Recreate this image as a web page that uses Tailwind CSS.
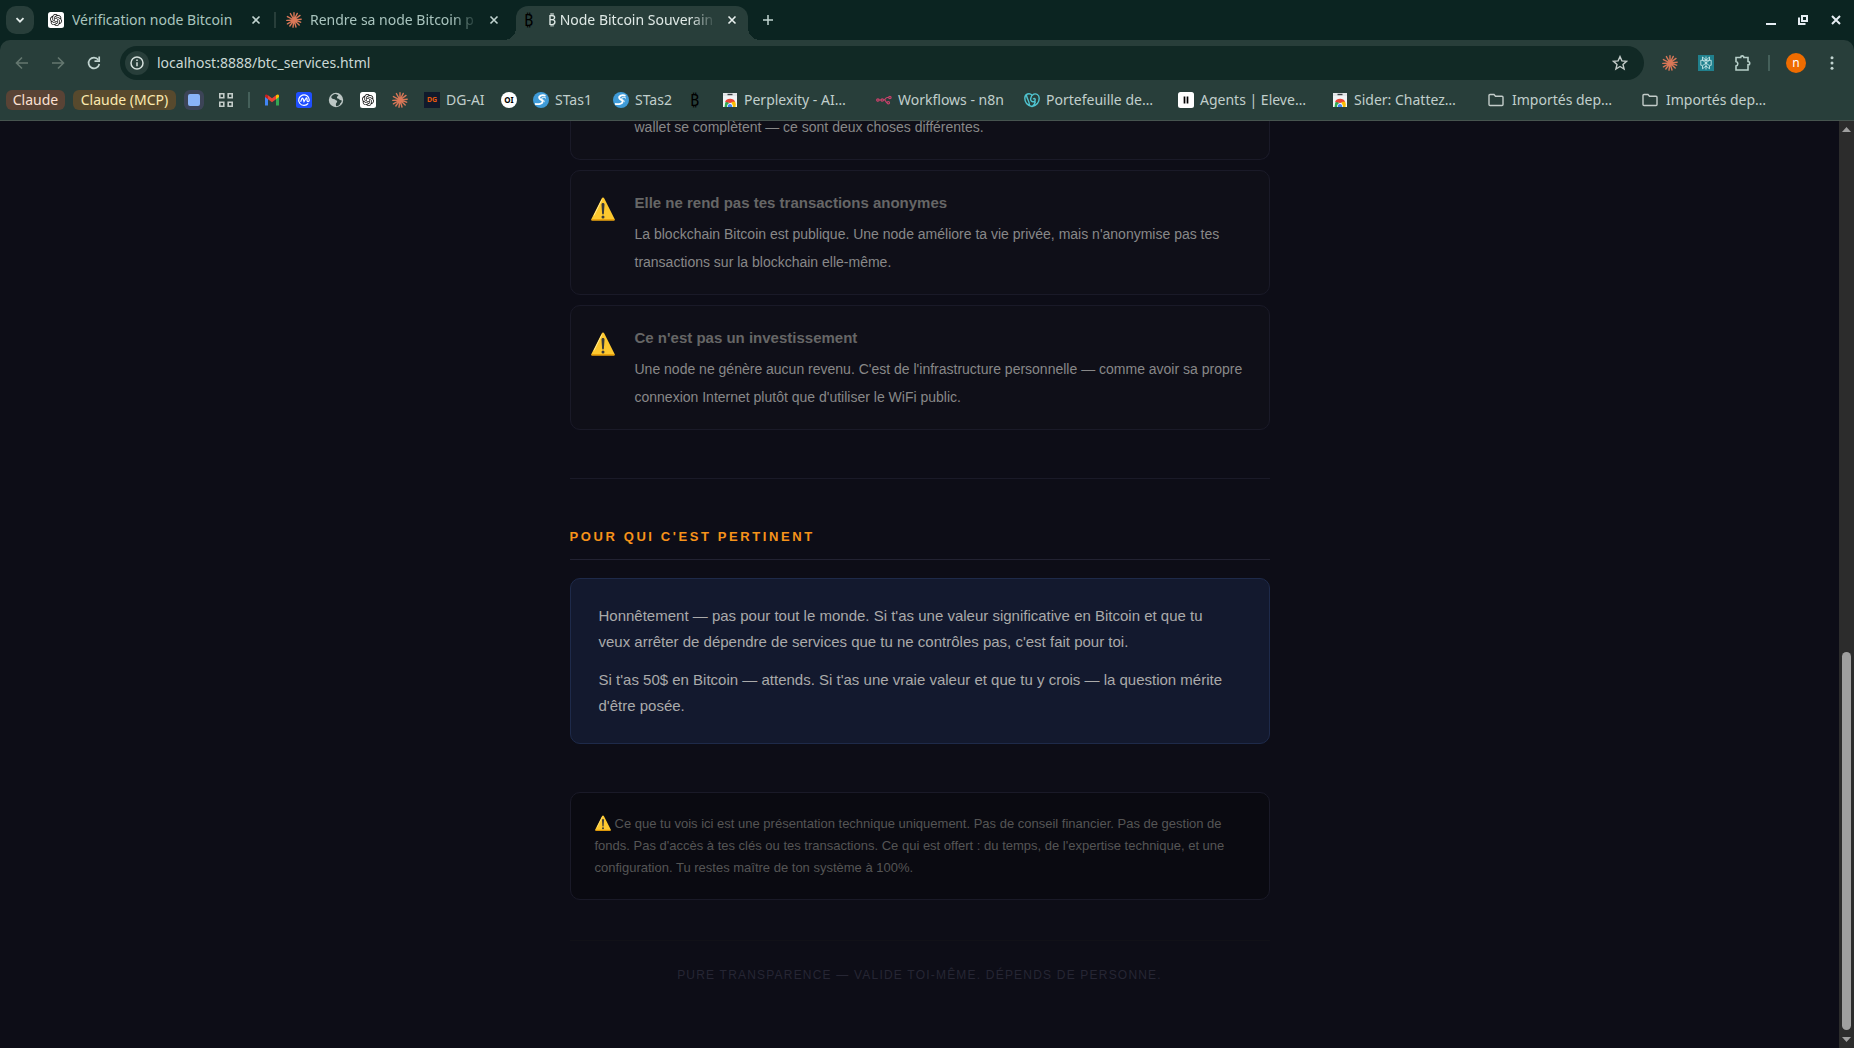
<!DOCTYPE html>
<html lang="fr">
<head>
<meta charset="utf-8">
<title>₿ Node Bitcoin Souverain</title>
<script src="https://cdn.jsdelivr.net/npm/@tailwindcss/browser@4"></script>
</head>
<body class="flex h-screen flex-col overflow-hidden bg-[#0b2421] font-['Noto_Sans','DejaVu_Sans',sans-serif] text-sm text-[#c1cfcc]">

<svg class="hidden" aria-hidden="true">
  <symbol id="burst" viewBox="0 0 16 16"><g stroke="#d97757" stroke-width="1.4" stroke-linecap="round"><path d="M8 8V.8M8 8l3.3-6.6M8 8l6-4.6M8 8l7.2-.8M8 8l6.6 2.2M8 8l5.2 5M8 8l2 7M8 8l-1 7.2M8 8l-4.2 6M8 8l-6.6 3.8M8 8l-7.2.4M8 8L1.4 4.6M8 8L4.4 1.6"/></g></symbol>
  <symbol id="gpt" viewBox="0 0 32 32"><rect width="32" height="32" rx="5" fill="#fff"/><path transform="translate(4 4)" fill="#111" d="M22.2819 9.8211a5.9847 5.9847 0 0 0-.5157-4.9108 6.0462 6.0462 0 0 0-6.5098-2.9A6.0651 6.0651 0 0 0 4.9807 4.1818a5.9847 5.9847 0 0 0-3.9977 2.9 6.0462 6.0462 0 0 0 .7427 7.0966 5.98 5.98 0 0 0 .511 4.9107 6.051 6.051 0 0 0 6.5146 2.9001A5.9847 5.9847 0 0 0 13.2599 24a6.0557 6.0557 0 0 0 5.7718-4.2058 5.9894 5.9894 0 0 0 3.9977-2.9001 6.0557 6.0557 0 0 0-.7475-7.0729zm-9.022 12.6081a4.4755 4.4755 0 0 1-2.8764-1.0408l.1419-.0804 4.7783-2.7582a.7948.7948 0 0 0 .3927-.6813v-6.7369l2.02 1.1686a.071.071 0 0 1 .038.052v5.5826a4.504 4.504 0 0 1-4.4945 4.4944zm-9.6607-4.1254a4.4708 4.4708 0 0 1-.5346-3.0137l.142.0852 4.783 2.7582a.7712.7712 0 0 0 .7806 0l5.8428-3.3685v2.3324a.0804.0804 0 0 1-.0332.0615L9.74 19.9502a4.4992 4.4992 0 0 1-6.1408-1.6464zM2.3408 7.8956a4.485 4.485 0 0 1 2.3655-1.9728V11.6a.7664.7664 0 0 0 .3879.6765l5.8144 3.3543-2.0201 1.1685a.0757.0757 0 0 1-.071 0l-4.8303-2.7865A4.504 4.504 0 0 1 2.3408 7.872zm16.5963 3.8558L13.1038 8.364 15.1192 7.2a.0757.0757 0 0 1 .071 0l4.8303 2.7913a4.4944 4.4944 0 0 1-.6765 8.1042v-5.6772a.79.79 0 0 0-.407-.667zm2.0107-3.0231l-.142-.0852-4.7735-2.7818a.7759.7759 0 0 0-.7854 0L9.409 9.2297V6.8974a.0662.0662 0 0 1 .0284-.0615l4.8303-2.7866a4.4992 4.4992 0 0 1 6.6802 4.66zM8.3065 12.863l-2.02-1.1638a.0804.0804 0 0 1-.038-.0567V6.0742a4.4992 4.4992 0 0 1 7.3757-3.4537l-.142.0805L8.704 5.459a.7948.7948 0 0 0-.3927.6813zm1.0976-2.3654l2.602-1.4998 2.6069 1.4998v2.9994l-2.5974 1.4997-2.6067-1.4997Z"/></symbol>
  <symbol id="stas" viewBox="0 0 16 16"><circle cx="8" cy="8" r="8" fill="#3f9bd8"/><path d="M12.500 3.800C9 2.300 5.500 4 6.300 6.300c.5 1.400 3.400 1.400 3.300 3.300-.2 2.300-4 3-7.600 2.200" fill="none" stroke="#fff" stroke-width="1.800"/><path d="M13 6.200c-2.400-1.500-4.600-1-4.200.3.400 1 2.700 1.500 2.300 3.700" fill="none" stroke="#fff" stroke-width="1"/></symbol>
  <symbol id="store" viewBox="0 0 16 16"><path d="M1 1h14v14H1z" fill="#f1f3f4"/><path d="M1 1h14v3H1z" fill="#e4e6e8"/><path d="M5.500 1.800h5v1.400h-5z" fill="#3c4043"/><path d="M2.500 15a5.500 8 0 0 1 2-6.500L8 12v3z" fill="#34a853"/><path d="M3 9.800a5.500 5 0 0 1 10.200 0L8 11z" fill="#ea4335"/><path d="M13.200 9.800A7 7 0 0 1 13.500 15H9l1-5.200z" fill="#fbbc04"/><path d="M5 15a3 3.800 0 0 1 6 0z" fill="#fff"/><path d="M5.700 15a2.300 3 0 0 1 4.600 0z" fill="#4285f4"/></symbol>
  <symbol id="folder" viewBox="0 0 16 16"><path d="M1 3.500a1 1 0 0 1 1-1h4l1.500 1.700H14a1 1 0 0 1 1 1v7.300a1 1 0 0 1-1 1H2a1 1 0 0 1-1-1z" fill="none" stroke="#c3ccc9" stroke-width="1.400"/></symbol>
  <symbol id="close" viewBox="0 0 10 10"><path d="M1.500 1.500l7 7M8.500 1.500l-7 7" fill="none" stroke="currentColor" stroke-width="1.600"/></symbol>
  <symbol id="warn" viewBox="0 0 24 24"><path d="M12 .6c.6 0 1 .4 1.300.9l10.300 20.400c.4.900 0 1.700-1 1.700H1.400c-1 0-1.400-.8-1-1.700L10.700 1.500c.3-.5.700-.9 1.300-.9z" fill="#fdc82f"/><path d="M.4 22.300h23.200c0 .8-.4 1.300-1 1.300H1.400c-.7 0-1-.6-1-1.300z" fill="#e59600"/><path d="M11 2.500L3 18.500" stroke="#fff0a8" stroke-width="1" opacity=".8"/><path d="M10.500 7.500c0-1 .6-1.500 1.500-1.500s1.500.5 1.500 1.500L12.900 16.500c0 .6-.4.900-.9.900s-.9-.3-.9-.9z" fill="#3a3a3a"/><circle cx="12" cy="20" r="1.500" fill="#3a3a3a"/></symbol>
</svg>

<header class="shrink-0">
  <!-- Tab strip -->
  <div class="flex h-10 items-center pl-[6px]">
    <button aria-label="Rechercher des onglets" class="flex size-7 items-center justify-center rounded-[10px] bg-[#283e3a]"><svg class="size-3" viewBox="0 0 12 12"><path d="M2.500 4.200L6 7.700l3.500-3.500" fill="none" stroke="#e3ecea" stroke-width="1.800"/></svg></button>
    <nav class="flex h-full items-center" aria-label="Onglets">
      <div class="flex w-[240px] items-center pl-[14px]">
        <svg class="size-4 shrink-0"><use href="#gpt"/></svg>
        <a href="#" class="ml-2 w-[170px] overflow-hidden whitespace-nowrap text-[#a9c4be]">Vérification node Bitcoin</a>
        <button aria-label="Fermer l'onglet" class="ml-[9px] text-[#c1d4d0]"><svg class="size-[10px]"><use href="#close"/></svg></button>
      </div>
      <div class="h-4 w-[2px] bg-[#283e3a]"></div>
      <div class="flex w-[240px] items-center pl-[10px]">
        <svg class="size-4 shrink-0"><use href="#burst"/></svg>
        <a href="#" class="ml-2 w-[168px] overflow-hidden mask-r-from-85% whitespace-nowrap text-[#a9c4be]">Rendre sa node Bitcoin p</a>
        <button aria-label="Fermer l'onglet" class="ml-[11px] text-[#c1d4d0]"><svg class="size-[10px]"><use href="#close"/></svg></button>
      </div>
      <div class="relative mt-[6px] flex h-[34px] w-[232px] items-center self-stretch rounded-t-xl bg-[#283e3a] pb-[6px] pl-2">
        <span class="absolute bottom-0 -left-3 size-3 bg-[radial-gradient(circle_at_0_0,transparent_12px,#283e3a_12px)]"></span>
        <span class="absolute -right-3 bottom-0 size-3 bg-[radial-gradient(circle_at_100%_0,transparent_12px,#283e3a_12px)]"></span>
        <span class="w-4 shrink-0 text-base leading-none text-black">₿</span>
        <a href="#" aria-current="page" class="ml-2 w-[168px] overflow-hidden mask-r-from-85% whitespace-nowrap text-[#dfe9e6]">₿ Node Bitcoin Souverain</a>
        <button aria-label="Fermer l'onglet" class="ml-[11px] text-[#e8f0ee]"><svg class="size-[10px]"><use href="#close"/></svg></button>
      </div>
      <button aria-label="Nouvel onglet" class="ml-[14px]"><svg class="size-3" viewBox="0 0 12 12"><path d="M6 1v10M1 6h10" stroke="#c1d4d0" stroke-width="1.500"/></svg></button>
    </nav>
    <div class="ml-auto flex items-center gap-[22px] pr-3">
      <button aria-label="Réduire"><svg class="size-[10px]" viewBox="0 0 10 10"><path d="M0 9h10" stroke="#e6edf3" stroke-width="2"/></svg></button>
      <button aria-label="Restaurer"><svg class="size-[10px]" viewBox="0 0 10 10"><path d="M4 1h5v5H4zM1 2.500V9h6.500" fill="none" stroke="#e6edf3" stroke-width="2"/></svg></button>
      <button aria-label="Fermer"><svg class="size-3" viewBox="0 0 12 12"><path d="M2 2l8 8M10 2l-8 8" stroke="#e6edf3" stroke-width="2"/></svg></button>
    </div>
  </div>

  <div class="rounded-t-[10px] border-b border-[#46544f] bg-[#283e3a]">
    <!-- Address bar -->
    <div class="flex h-10 items-end">
      <div class="flex h-[34px] w-[120px] items-center gap-5 pl-[14px]">
        <button aria-label="Précédent"><svg class="size-4" viewBox="0 0 16 16"><path d="M14 8H2.500M8 2.500L2.500 8 8 13.500" fill="none" stroke="#64776f" stroke-width="1.600"/></svg></button>
        <button aria-label="Suivant"><svg class="size-4" viewBox="0 0 16 16"><path d="M2 8h11.500M8 2.500L13.500 8 8 13.500" fill="none" stroke="#64776f" stroke-width="1.600"/></svg></button>
        <button aria-label="Actualiser"><svg class="size-4" viewBox="0 0 16 16"><path d="M13.300 9A5.400 5.400 0 1 1 12.300 4.700" fill="none" stroke="#c1d4d0" stroke-width="1.700"/><path d="M13.200 1.500v4.700H8.500" fill="none" stroke="#c1d4d0" stroke-width="1.700"/></svg></button>
      </div>
      <div class="flex h-[34px] flex-1 items-center rounded-full bg-[#112925] pr-4 pl-[5px]">
        <button aria-label="Informations sur le site" class="flex size-6 items-center justify-center rounded-full bg-[#283e3a]"><svg class="size-[14px]" viewBox="0 0 14 14"><circle cx="7" cy="7" r="6" fill="none" stroke="#d5e0dd" stroke-width="1.500"/><path d="M7 6.200v4M7 3.500v1.500" stroke="#d5e0dd" stroke-width="1.500"/></svg></button>
        <input aria-label="Adresse" class="ml-2 min-w-0 flex-1 bg-transparent text-[#cbd8d5] outline-none" value="localhost:8888/btc_services.html">
        <button aria-label="Ajouter aux favoris"><svg class="size-4" viewBox="0 0 16 16"><path d="M8 1.600l1.900 4.300 4.600.4-3.500 3.100 1.100 4.600L8 11.500 3.900 14 5 9.400 1.500 6.300l4.600-.4z" fill="none" stroke="#c3ccc9" stroke-width="1.400"/></svg></button>
      </div>
      <div class="flex h-[34px] w-[210px] items-center pl-[18px]">
        <button aria-label="Claude"><svg class="size-4"><use href="#burst"/></svg></button>
        <button aria-label="Perplexity" class="ml-5"><svg class="size-4" viewBox="0 0 16 16"><path d="M0 0h16v16H0z" fill="#20808d"/><path d="M8 1.500v13M4.500 2v3.200L8 8l3.500-2.800V2L8 5.200zM2.800 5.300h10.400v5h-1.700M4.500 10.300H2.800v-5M8 8l-3.500 2.800v3L8 11l3.500 2.800v-3z" fill="none" stroke="#d5f0ef" stroke-width=".8"/></svg></button>
        <button aria-label="Extensions" class="ml-5"><svg class="size-[18px]" viewBox="0 0 18 18"><path d="M2 3.500h4.700a1.600 1.600 0 0 1 3.200 0H14v4a1.600 1.600 0 0 1 0 3.400V16H2v-4a2.300 2.300 0 0 0 0-4.500z" fill="none" stroke="#b7cfc9" stroke-width="1.600"/></svg></button>
        <div class="ml-4 h-4 w-[2px] bg-[#45605a]"></div>
        <button aria-label="Profil" class="ml-4 flex size-5 items-center justify-center rounded-full bg-[#ef6c00] text-xs leading-none text-white">n</button>
        <button aria-label="Menu" class="ml-[18px]"><svg class="size-4" viewBox="0 0 16 16"><g fill="#c1d4d0"><circle cx="8" cy="2.700" r="1.500"/><circle cx="8" cy="8" r="1.500"/><circle cx="8" cy="13.300" r="1.500"/></g></svg></button>
      </div>
    </div>

    <!-- Bookmarks -->
    <nav class="flex h-10 items-center pl-[6px] whitespace-nowrap" aria-label="Favoris">
      <button class="h-5 w-[59px] rounded-md bg-[#594335] text-center leading-5 text-[#fbe0d3]">Claude</button>
      <button class="ml-2 h-5 w-[103px] rounded-md bg-[#57492d] text-center leading-5 text-[#fbe9b0]">Claude (MCP)</button>
      <button aria-label="Groupe" class="ml-2 flex size-5 items-center justify-center rounded-md bg-[#3c4457]"><span class="size-3 rounded-[2px] bg-[#8ab4f8]"></span></button>
      <button aria-label="Groupes d'onglets" class="ml-[14px]"><svg class="size-4" viewBox="0 0 16 16"><path d="M1.800 1.800h4v4h-4zM10.200 1.800h4v4h-4zM1.800 10.200h4v4h-4zM10.200 10.200h4v4h-4z" fill="none" stroke="#c3ccc9" stroke-width="1.600"/></svg></button>
      <div class="ml-[14px] h-4 w-[2px] bg-[#45605a]"></div>
      <a href="#" aria-label="Gmail" class="ml-[6px] flex w-8 px-2"><svg class="size-4" viewBox="0 0 16 16"><path d="M1 3.500v10h3V6z" fill="#4285f4"/><path d="M15 3.500v10h-3V6z" fill="#34a853"/><path d="M4 3.300v4L8 10.300l4-3v-4L8 6.300z" fill="#ea4335"/><path d="M12 3.300v4l3-2.300v-1c0-1.500-1.500-2-3-.7z" fill="#fbbc04"/><path d="M4 3.300v4L1 5v-1c0-1.500 1.500-2 3-.7z" fill="#c5221f"/></svg></a>
      <a href="#" aria-label="CoinMarketCap" class="flex w-8 px-2"><svg class="size-4" viewBox="0 0 16 16"><rect width="16" height="16" rx="2.500" fill="#1f4fff"/><path d="M12.200 11.400A5.300 5.300 0 1 1 13.300 8c0 2-2.300 2-2.300.3V6.700c0-1-.8-1-1.200-.2L8 9.500 7 6.600c-.3-.7-.8-.7-1.100 0L4.600 9.800" fill="none" stroke="#fff" stroke-width="1.200"/></svg></a>
      <a href="#" aria-label="Site" class="flex w-8 px-2"><svg class="size-4" viewBox="0 0 16 16"><circle cx="8" cy="8" r="7.200" fill="#bcc6c4"/><path d="M7.500 2c-2 .3-3.300 1.200-4.300 3 .3 1.500 1.800 2.200 3.300 2.200 1 0 1 1.300 2 1.300s.8 1.500 0 2.200c-1 .6-.6 2.500-.3 3.500 1.500 0 3-.8 3.800-2 0-1.300 1.800-1.600 1.800-3.700-1-.5-2.500-.2-2.700-1.500-.8-.6-2.200 0-2.200-1.500s1.800-1 1.300-2.400z" fill="#283e3a"/></svg></a>
      <a href="#" aria-label="ChatGPT" class="flex w-8 px-2"><svg class="size-4"><use href="#gpt"/></svg></a>
      <a href="#" aria-label="Claude" class="flex w-8 px-2"><svg class="size-4"><use href="#burst"/></svg></a>
      <a href="#" class="flex w-[77px] items-center gap-[6px] px-2"><span class="flex size-4 shrink-0 items-center justify-center bg-[#111a2c] text-[7px] font-bold text-[#e8590c]">DG</span>DG-AI</a>
      <a href="#" class="flex w-8 px-2"><span class="flex size-4 items-center justify-center rounded-full bg-white text-[8px] font-bold text-black">OI</span></a>
      <a href="#" class="flex w-20 items-center gap-[6px] px-2"><svg class="size-4 shrink-0"><use href="#stas"/></svg>STas1</a>
      <a href="#" class="flex w-[77px] items-center gap-[6px] px-2"><svg class="size-4 shrink-0"><use href="#stas"/></svg>STas2</a>
      <a href="#" class="w-8 px-2 text-base leading-none text-black">₿</a>
      <a href="#" class="flex w-[154px] items-center gap-[6px] px-2"><svg class="size-4 shrink-0"><use href="#store"/></svg>Perplexity - AI…</a>
      <a href="#" class="flex w-[148px] items-center gap-[6px] px-2"><svg class="size-4 shrink-0" viewBox="0 0 16 16"><g fill="none" stroke="#c9416b" stroke-width="1.200"><circle cx="1.900" cy="8" r="1.200"/><circle cx="6.300" cy="8" r="1.200"/><circle cx="13.900" cy="5.500" r="1.200"/><circle cx="12.300" cy="10.700" r="1.200"/><path d="M3 8h2M7.500 8c2.500 0 1.500-2.500 3.700-2.500h1.500M8.500 8c1.500 0 1 2.700 2.600 2.700"/></g></svg>Workflows - n8n</a>
      <a href="#" class="flex w-[154px] items-center gap-[6px] px-2"><svg class="size-4 shrink-0" viewBox="0 0 16 16"><path d="M8 3C5.500.6.800 1.600.8 6.300c0 4 3 7.200 7.200 8.200 4.200-1 7.200-4.200 7.200-8.200C15.200 2.600 12 1.300 9.800 2.200 6 4 5.500 9.500 8.800 9.800c2 .1 2.900-1.700 2.200-3.300M2.500 3.300C3 7 5 8.500 5.500 13M11 6.500c-.5 0-1.500.2-1.800.8M8.500 14c1.500-1 2.500-2.500 3-4.500" fill="none" stroke="#4fc3cf" stroke-width="1.400"/></svg>Portefeuille de…</a>
      <a href="#" class="flex w-[154px] items-center gap-[6px] px-2"><svg class="size-4 shrink-0" viewBox="0 0 16 16"><rect width="16" height="16" rx="2.500" fill="#fff"/><path d="M6.500 4.500v7M9.500 4.500v7" stroke="#000" stroke-width="1.700"/></svg>Agents | Eleve…</a>
      <a href="#" class="flex w-[156px] items-center gap-[6px] px-2"><svg class="size-4 shrink-0"><use href="#store"/></svg>Sider: Chattez…</a>
      <a href="#" class="flex w-[154px] items-center gap-2 px-2"><svg class="size-4 shrink-0"><use href="#folder"/></svg>Importés dep…</a>
      <a href="#" class="flex w-[154px] items-center gap-2 px-2"><svg class="size-4 shrink-0"><use href="#folder"/></svg>Importés dep…</a>
    </nav>
  </div>
</header>

<div class="flex min-h-0 flex-1 bg-[#0d0d17] font-['Liberation_Sans',Arial,sans-serif]">
  <main class="flex-1 overflow-hidden">
    <div class="mx-auto -mt-2 max-w-[700px]">
      <div class="flex flex-col gap-[10px]">
        <article class="rounded-b-[10px] border border-t-0 border-[#1a1a28] bg-[#0f0f18] pr-5 pb-[18px] pl-16">
          <p class="leading-7 text-[#888]">wallet se complètent — ce sont deux choses différentes.</p>
        </article>
        <article class="flex gap-5 rounded-[10px] border border-[#1a1a28] bg-[#0f0f18] px-5 py-[18px]">
          <svg class="mt-2 size-6 shrink-0" role="img" aria-label="Attention"><use href="#warn"/></svg>
          <div>
            <h3 class="mb-1 text-[15px] leading-[27px] font-bold text-[#666]">Elle ne rend pas tes transactions anonymes</h3>
            <p class="leading-7 text-[#888]">La blockchain Bitcoin est publique. Une node améliore ta vie privée, mais n'anonymise pas tes transactions sur la blockchain elle-même.</p>
          </div>
        </article>
        <article class="flex gap-5 rounded-[10px] border border-[#1a1a28] bg-[#0f0f18] px-5 py-[18px]">
          <svg class="mt-2 size-6 shrink-0" role="img" aria-label="Attention"><use href="#warn"/></svg>
          <div>
            <h3 class="mb-1 text-[15px] leading-[27px] font-bold text-[#666]">Ce n'est pas un investissement</h3>
            <p class="leading-7 text-[#888]">Une node ne génère aucun revenu. C'est de l'infrastructure personnelle — comme avoir sa propre connexion Internet plutôt que d'utiliser le WiFi public.</p>
          </div>
        </article>
      </div>

      <hr class="my-12 border-[#1a1a28]">

      <h2 class="border-b border-[#222232] pb-3 text-[13px] leading-5 font-bold tracking-[0.2em] text-[#f7931a] uppercase">Pour qui c'est pertinent</h2>
      <section class="mt-[18px] flex flex-col gap-3 rounded-[10px] border border-[#1e2a4a] bg-[#13192e] py-6 pr-9 pl-7 text-[15px] leading-[26px] text-[#aaa]">
        <p>Honnêtement — pas pour tout le monde. Si t'as une valeur significative en Bitcoin et que tu veux arrêter de dépendre de services que tu ne contrôles pas, c'est fait pour toi.</p>
        <p>Si t'as 50$ en Bitcoin — attends. Si t'as une vraie valeur et que tu y crois — la question mérite d'être posée.</p>
      </section>

      <p class="mt-12 rounded-[10px] border border-[#1a1a28] bg-[#0a0a11] px-6 py-5 text-[13px] leading-[22px] text-[#555]"><svg class="mr-1 inline-block size-4 align-[-3px]" role="img" aria-label="Attention"><use href="#warn"/></svg>Ce que tu vois ici est une présentation technique uniquement. Pas de conseil financier. Pas de gestion de fonds. Pas d'accès à tes clés ou tes transactions. Ce qui est offert : du temps, de l'expertise technique, et une configuration. Tu restes maître de ton système à 100%.</p>

      <footer class="mt-10 border-t border-[#111118] pt-6 text-center text-xs leading-5 tracking-widest text-[#262634] uppercase">Pure transparence — valide toi-même. Dépends de personne.</footer>
    </div>
  </main>
  <aside class="flex w-[15px] flex-col items-center justify-between bg-[#2c2c2c] py-[6px]" aria-label="Barre de défilement">
    <svg class="h-[5px] w-[9px]" viewBox="0 0 9 5"><path d="M4.500 0L9 5H0z" fill="#9f9f9f"/></svg>
    <div class="mt-auto mb-[7px] h-[378px] w-[9px] rounded-full bg-[#9f9f9f]"></div>
    <svg class="h-[5px] w-[9px]" viewBox="0 0 9 5"><path d="M4.500 5L9 0H0z" fill="#9f9f9f"/></svg>
  </aside>
</div>
</body>
</html>
